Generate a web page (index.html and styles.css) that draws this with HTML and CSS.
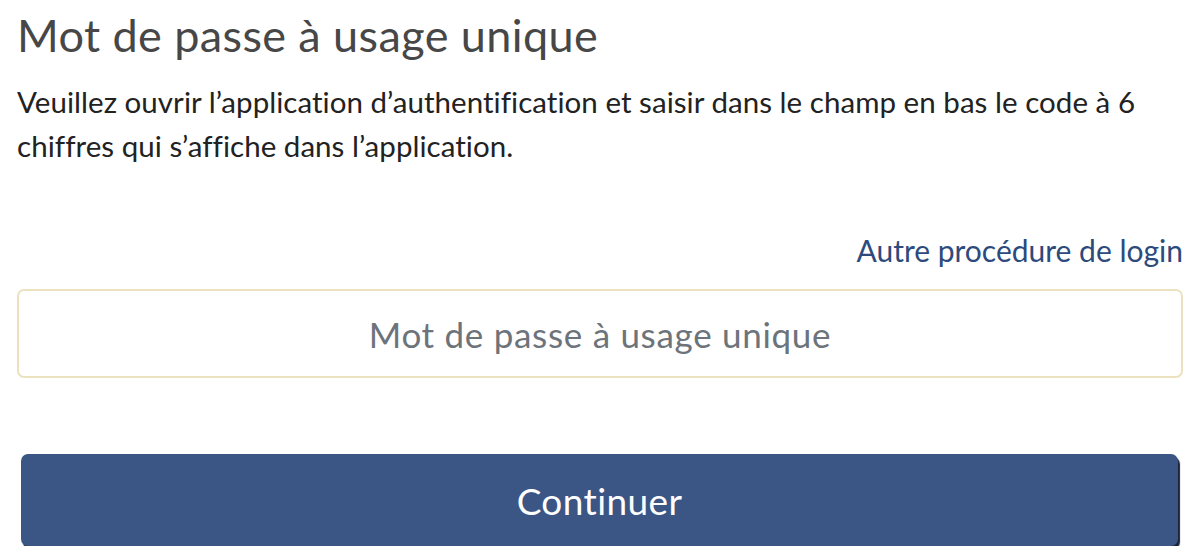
FILE: index.html
```html
<!DOCTYPE html>
<html lang="fr">
<head>
<meta charset="utf-8">
<title>Mot de passe à usage unique</title>
<link rel="stylesheet" href="styles.css">
</head>
<body>
<main class="page">
  <h1 class="title">Mot de passe à usage unique</h1>
  <p class="intro">Veuillez ouvrir l’application d’authentification et saisir dans le champ en bas le code à 6 chiffres qui s’affiche dans l’application.</p>
  <div class="alt-row"><a class="alt-link" href="#">Autre procédure de login</a></div>
  <input class="otp-input" type="text" placeholder="Mot de passe à usage unique">
  <button class="submit" type="button">Continuer</button>
</main>
</body>
</html>
```

FILE: styles.css
```css
html, body {
  margin: 0;
  padding: 0;
  background: #ffffff;
}
body {
  font-family: Lato, "Open Sans", "Liberation Sans", sans-serif;
  font-variant-ligatures: none;
}
.page {
  display: flex;
  flex-direction: column;
  padding: 0 20px 0 17px;
}
.title {
  margin: 9px 0 0;
  font-size: 45px;
  line-height: 53px;
  font-weight: 400;
  color: #474747;
  letter-spacing: 0.4px;
}
.intro {
  margin: 18px 0 0;
  font-size: 29.5px;
  line-height: 44px;
  color: #222222;
  max-width: 1140px;
  letter-spacing: 0.04px;
}
.alt-row {
  display: flex;
  justify-content: flex-end;
  margin-top: 60px;
}
.alt-link {
  font-size: 30px;
  line-height: 44px;
  color: #2d4a7d;
  text-decoration: none;
}
.otp-input {
  margin-top: 17px;
  height: 89px;
  box-sizing: border-box;
  border: 2px solid #ece2bf;
  border-radius: 7px;
  font-family: inherit;
  font-variant-ligatures: none;
  font-size: 35px;
  letter-spacing: 0.7px;
  text-align: center;
  color: #333;
  background: #fff;
  outline: none;
}
.otp-input::placeholder {
  color: #6c737b;
}
.submit {
  margin: 76px 0 0 4px;
  width: 1157px;
  height: 92px;
  border: none;
  border-radius: 7px;
  background: #3b5584;
  color: #ffffff;
  font-family: inherit;
  font-size: 37px;
  letter-spacing: 0.4px;
  box-shadow: 2px 3px 1px #1b2338;
  cursor: pointer;
}
```
